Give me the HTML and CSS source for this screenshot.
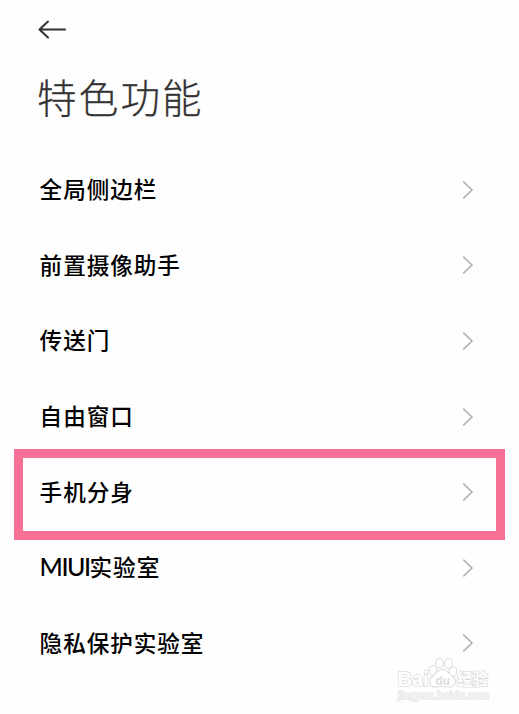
FILE: index.html
```
<!DOCTYPE html>
<html lang="zh-CN">
<head>
    <meta charset="UTF-8">
    <meta name="viewport" content="width=device-width, initial-scale=1.0">
    <title>特色功能</title>
    <link rel="stylesheet" href="styles.css">
</head>
<body>

<svg width="0" height="0" class="symbols">
    <symbol id="chevron" viewBox="0 0 12 20">
        <path d="M1.3 1.6L10 10L1.3 18.4" fill="none" stroke="#b2b2b2" stroke-width="1.6"/>
    </symbol>
</svg>

<header class="header">
    <svg class="back" viewBox="0 0 30 22">
        <path d="M28 10.6H2.5M11 2.6L2.5 10.6L11 18.6" fill="none" stroke="#333" stroke-width="2" stroke-linecap="round" stroke-linejoin="round"/>
    </svg>
    <h1>特色功能</h1>
</header>

<div class="list">
    <div class="item"><span>全局侧边栏</span><svg class="chevron"><use href="#chevron"/></svg></div>
    <div class="item"><span>前置摄像助手</span><svg class="chevron"><use href="#chevron"/></svg></div>
    <div class="item"><span>传送门</span><svg class="chevron"><use href="#chevron"/></svg></div>
    <div class="item"><span>自由窗口</span><svg class="chevron"><use href="#chevron"/></svg></div>
    <div class="item marked"><span>手机分身</span><svg class="chevron"><use href="#chevron"/></svg></div>
    <div class="item"><span><b class="latin">MIUI</b>实验室</span><svg class="chevron"><use href="#chevron"/></svg></div>
    <div class="item"><span>隐私保护实验室</span><svg class="chevron"><use href="#chevron"/></svg></div>
</div>

<!-- watermark -->
<svg class="watermark" viewBox="0 0 100 50">
    <g fill="#fff" stroke="#dedede" stroke-width="1.1">
        <ellipse cx="38" cy="14.5" rx="3.8" ry="5"/>
        <ellipse cx="44.5" cy="7" rx="3.8" ry="5"/>
        <ellipse cx="53.5" cy="7.5" rx="3.8" ry="5"/>
        <ellipse cx="58" cy="15.5" rx="3.8" ry="4.8"/>
        <path d="M47.5 13.5C53 13.5 54 18 57.5 20.5C63 25 60 32 53 31C49 30.3 46 30.3 42 31C35 32 32 25 37.5 20.5C41 18 42 13.5 47.5 13.5Z"/>
    </g>
    <g class="watermark-text">
        <text x="2.5" y="30" font-size="21" textLength="31" lengthAdjust="spacingAndGlyphs">Bai</text>
        <text x="40.5" y="28.5" font-size="13" textLength="14.5" lengthAdjust="spacingAndGlyphs" class="du">du</text>
        <text x="62" y="29" font-size="16" textLength="31" lengthAdjust="spacingAndGlyphs">经验</text>
        <text x="3" y="43" font-size="11" textLength="91" lengthAdjust="spacingAndGlyphs" class="url">jingyan.baidu.com</text>
    </g>
</svg>

</body>
</html>
```
FILE: styles.css
```
body {
    margin: 0;
    height: 714px;
    overflow: hidden;
    background-color: #fefefe;
    font-family: "Noto Sans CJK SC", sans-serif;
    color: #000;
}

.symbols {
    display: none;
}

.header {
    height: 152px;
    padding: 19px 37px 0;
    box-sizing: border-box;
}

.back {
    display: block;
    width: 30px;
    height: 22px;
}

h1 {
    margin: 25px 0 0;
    font-size: 39.5px;
    line-height: 60px;
    font-weight: 300;
    letter-spacing: 2.2px;
    color: #333;
    -webkit-text-stroke: 0.3px #333;
}

.item {
    position: relative;
    display: flex;
    align-items: center;
    justify-content: space-between;
    height: 75.6px;
    padding: 0 45px 0 39.6px;
    font-size: 22.6px;
    font-weight: 500;
    letter-spacing: 0.95px;
}

.item span {
    padding-bottom: 2px;
}

.latin {
    font-family: Lato, sans-serif;
    font-size: 25px;
    font-weight: 500;
    letter-spacing: -1.5px;
}

.chevron {
    width: 12px;
    height: 20px;
}

/* highlight frame around the row */
.marked::after {
    content: "";
    position: absolute;
    top: -5px;
    left: 14px;
    right: 14px;
    height: 73px;
    border: 9px solid #f97096;
}

.watermark {
    position: absolute;
    left: 395px;
    top: 656px;
    width: 100px;
    height: 50px;
}

.watermark-text {
    font-family: "Liberation Sans", "Noto Sans CJK SC", sans-serif;
    font-weight: bold;
    fill: #fff;
    stroke: #dcdcdc;
    stroke-width: 1.5px;
    paint-order: stroke;
}

.watermark-text .du {
    fill: #dcdcdc;
    stroke: none;
}

.watermark-text .url {
    font-weight: normal;
    fill: #f6f6f6;
    stroke: #e6e6e6;
}
```
